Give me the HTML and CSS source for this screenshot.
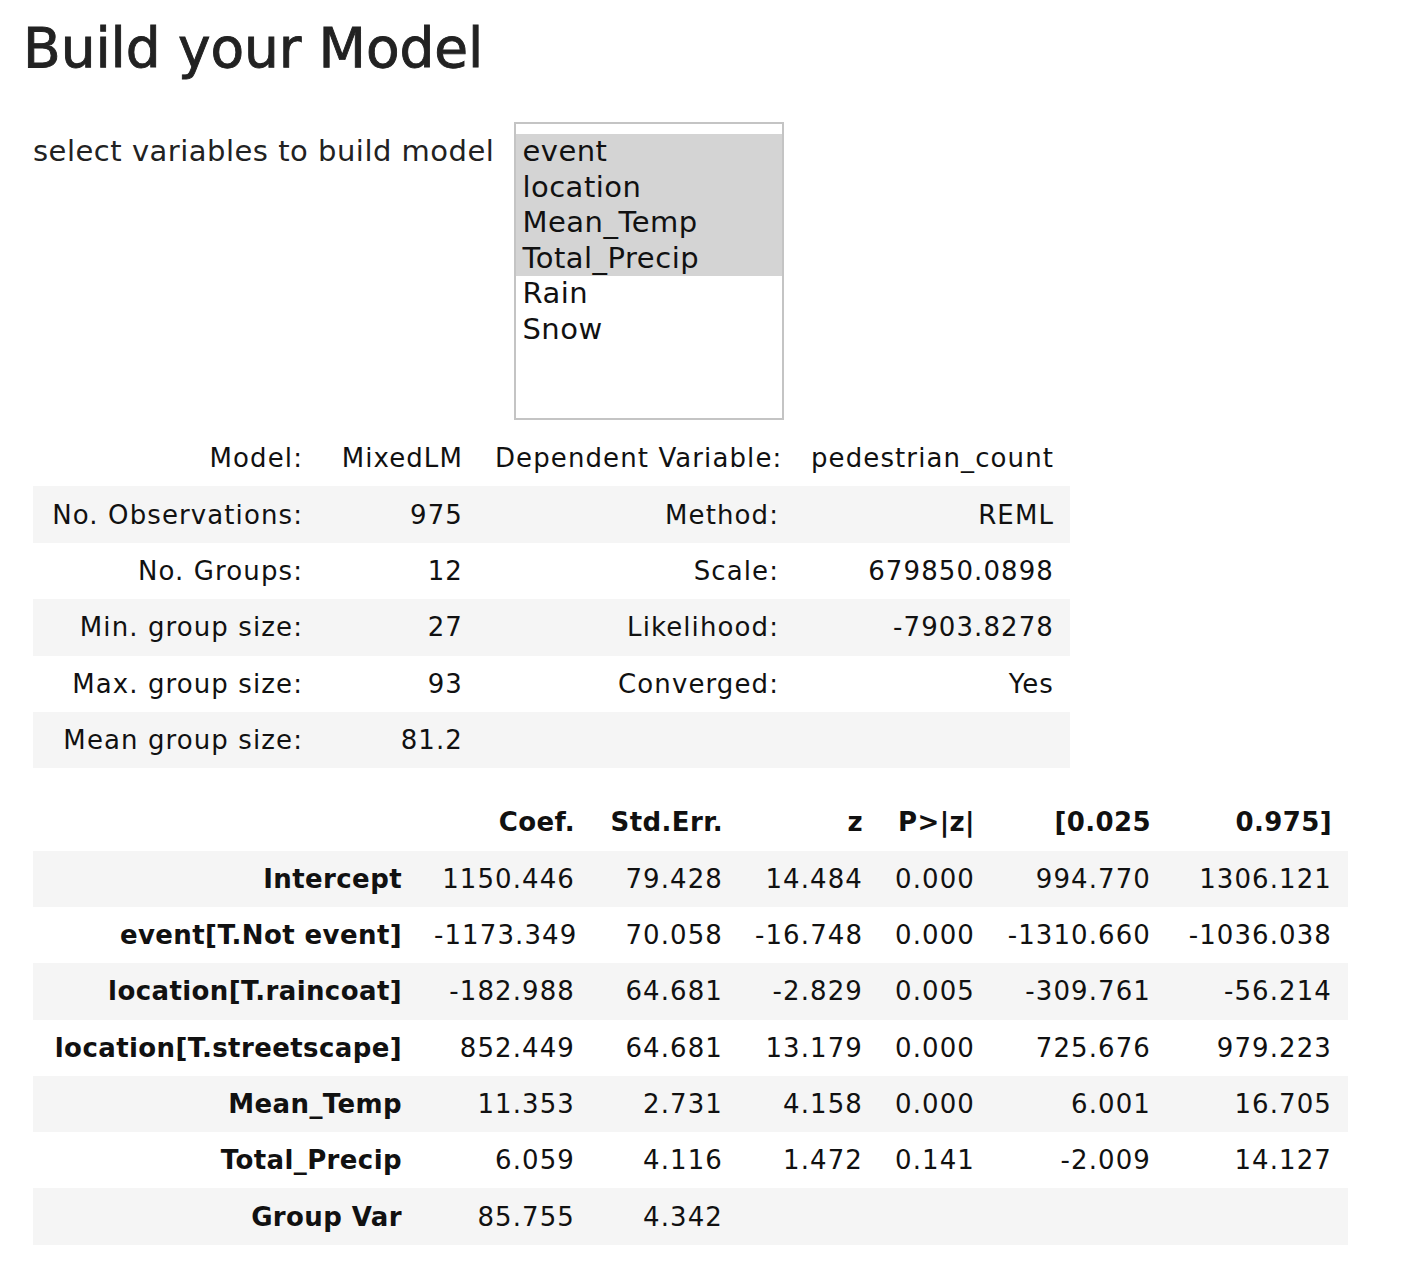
FILE: index.html
```html
<!DOCTYPE html>
<html lang="en">
<head>
<meta charset="utf-8">
<title>Build your Model</title>
<link rel="stylesheet" href="styles.css">
</head>
<body>
<div class="page">
  <h1 class="title">Build your Model</h1>

  <div class="widget">
    <label class="widget-label">select variables to build model</label>
    <div class="listbox">
      <div class="opt selected">event</div>
      <div class="opt selected">location</div>
      <div class="opt selected">Mean_Temp</div>
      <div class="opt selected">Total_Precip</div>
      <div class="opt">Rain</div>
      <div class="opt">Snow</div>
    </div>
  </div>

  <table class="summary info">
    <colgroup>
      <col class="c-i1"><col class="c-i2"><col class="c-i3"><col class="c-i4">
    </colgroup>
    <tbody>
      <tr><td>Model:</td><td>MixedLM</td><td>Dependent Variable:</td><td>pedestrian_count</td></tr>
      <tr><td>No. Observations:</td><td>975</td><td>Method:</td><td>REML</td></tr>
      <tr><td>No. Groups:</td><td>12</td><td>Scale:</td><td>679850.0898</td></tr>
      <tr><td>Min. group size:</td><td>27</td><td>Likelihood:</td><td>-7903.8278</td></tr>
      <tr><td>Max. group size:</td><td>93</td><td>Converged:</td><td>Yes</td></tr>
      <tr><td>Mean group size:</td><td>81.2</td><td></td><td></td></tr>
    </tbody>
  </table>

  <table class="summary coefs">
    <colgroup>
      <col class="c-k0"><col class="c-k1"><col class="c-k2"><col class="c-k3"><col class="c-k4"><col class="c-k5"><col class="c-k6">
    </colgroup>
    <thead>
      <tr><th></th><th>Coef.</th><th>Std.Err.</th><th>z</th><th>P&gt;|z|</th><th>[0.025</th><th>0.975]</th></tr>
    </thead>
    <tbody>
      <tr><th>Intercept</th><td>1150.446</td><td>79.428</td><td>14.484</td><td>0.000</td><td>994.770</td><td>1306.121</td></tr>
      <tr><th>event[T.Not event]</th><td>-1173.349</td><td>70.058</td><td>-16.748</td><td>0.000</td><td>-1310.660</td><td>-1036.038</td></tr>
      <tr><th>location[T.raincoat]</th><td>-182.988</td><td>64.681</td><td>-2.829</td><td>0.005</td><td>-309.761</td><td>-56.214</td></tr>
      <tr><th>location[T.streetscape]</th><td>852.449</td><td>64.681</td><td>13.179</td><td>0.000</td><td>725.676</td><td>979.223</td></tr>
      <tr><th>Mean_Temp</th><td>11.353</td><td>2.731</td><td>4.158</td><td>0.000</td><td>6.001</td><td>16.705</td></tr>
      <tr><th>Total_Precip</th><td>6.059</td><td>4.116</td><td>1.472</td><td>0.141</td><td>-2.009</td><td>14.127</td></tr>
      <tr><th>Group Var</th><td>85.755</td><td>4.342</td><td></td><td></td><td></td><td></td></tr>
    </tbody>
  </table>
</div>
</body>
</html>
```

FILE: styles.css
```css
html, body {
  margin: 0;
  padding: 0;
  background: #ffffff;
}

body {
  font-family: "DejaVu Sans", "Liberation Sans", sans-serif;
  color: #000;
}

.page {
  padding: 21px 0 0 33px;
}

.title {
  margin: 0 0 0 -10px;
  font-size: 55px;
  line-height: 55px;
  font-weight: normal;
  color: #222;
  letter-spacing: -0.1px;
  -webkit-text-stroke: 0.9px #222;
}

.widget {
  display: flex;
  align-items: flex-start;
  margin-top: 46px;
}

.widget-label {
  margin-top: 12px;
  margin-right: 20px;
  font-size: 29px;
  line-height: 35.5px;
  letter-spacing: 0.5px;
  color: #222;
  white-space: nowrap;
}

.listbox {
  box-sizing: border-box;
  width: 270px;
  height: 298px;
  border: 2px solid #c4c4c4;
  padding-top: 10px;
  background: #fff;
}

.opt {
  height: 35.5px;
  line-height: 35.5px;
  padding-left: 6px;
  font-size: 29px;
  letter-spacing: 0.5px;
  color: #111;
}

.opt.selected {
  background: #d4d4d4;
}

.summary {
  border-collapse: collapse;
  border-spacing: 0;
  table-layout: fixed;
  font-size: 26px;
  letter-spacing: 1.1px;
  color: #111;
}

.summary td,
.summary th {
  height: 56.4px;
  padding: 0 16px;
  text-align: right;
  white-space: nowrap;
  vertical-align: middle;
}

.summary th {
  font-weight: bold;
  letter-spacing: 0.4px;
}

.info {
  margin-top: 10px;
  width: 1037px;
}

.info tbody tr:nth-child(even) {
  background: #f5f5f5;
}

.c-i1 { width: 286px; }
.c-i2 { width: 160px; }
.c-i3 { width: 316px; }
.c-i4 { width: 275px; }

.coefs {
  margin-top: 26px;
  width: 1315px;
}

.coefs td,
.coefs th {
  height: 56.3px;
}

.coefs tbody tr:nth-child(odd) {
  background: #f5f5f5;
}

.c-k0 { width: 385px; }
.c-k1 { width: 173px; }
.c-k2 { width: 148px; }
.c-k3 { width: 140px; }
.c-k4 { width: 112px; }
.c-k5 { width: 176px; }
.c-k6 { width: 181px; }
```
